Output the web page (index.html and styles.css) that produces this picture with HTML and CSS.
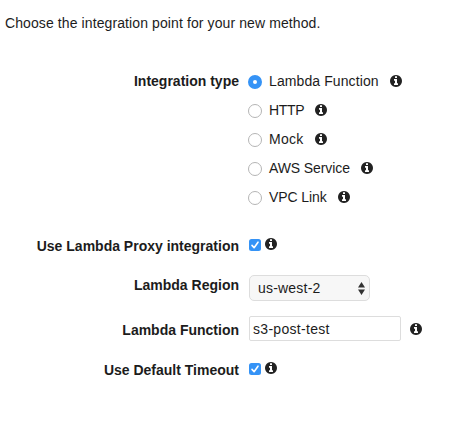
FILE: index.html
```html
<!DOCTYPE html>
<html lang="en">
<head>
<meta charset="utf-8">
<title>Method integration</title>
<link rel="stylesheet" href="styles.css">
</head>
<body>
<svg width="0" height="0" class="defs">
  <symbol id="info" viewBox="0 128 1536 1536"><path d="M1024 1376v-160q0-14-9-23t-23-9h-96v-512q0-14-9-23t-23-9h-320q-14 0-23 9t-9 23v160q0 14 9 23t23 9h96v320h-96q-14 0-23 9t-9 23v160q0 14 9 23t23 9h448q14 0 23-9t9-23zm-128-896v-160q0-14-9-23t-23-9h-192q-14 0-23 9t-9 23v160q0 14 9 23t23 9h192q14 0 23-9t9-23zm640 416q0 209-103 385.5t-279.5 279.5-385.5 103-385.5-103-279.5-279.5-103-385.5 103-385.5 279.5-279.5 385.5-103 385.5 103 279.5 279.5 103 385.5z"/></symbol>
  <symbol id="check" viewBox="0 0 12 12"><path d="M3 6.4 5.1 8.7 9 3.2" fill="none" stroke="#fff" stroke-width="1.6" stroke-linecap="round" stroke-linejoin="round"/></symbol>
</svg>
<p class="intro">Choose the integration point for your new method.</p>
<form class="form">
  <div class="row types">
    <span class="label">Integration type</span>
    <div class="options">
      <label class="option"><span class="radio on"></span><span class="text">Lambda Function</span><svg class="info"><use href="#info"/></svg></label>
      <label class="option"><span class="radio"></span><span class="text http">HTTP</span><svg class="info"><use href="#info"/></svg></label>
      <label class="option"><span class="radio"></span><span class="text mock">Mock</span><svg class="info"><use href="#info"/></svg></label>
      <label class="option"><span class="radio"></span><span class="text aws">AWS Service</span><svg class="info"><use href="#info"/></svg></label>
      <label class="option"><span class="radio"></span><span class="text vpc">VPC Link</span><svg class="info"><use href="#info"/></svg></label>
    </div>
  </div>
  <div class="row proxy">
    <span class="label">Use Lambda Proxy integration</span>
    <div class="control"><svg class="checkbox"><use href="#check"/></svg><svg class="info"><use href="#info"/></svg></div>
  </div>
  <div class="row region">
    <span class="label">Lambda Region</span>
    <div class="control"><div class="select"><span>us-west-2</span><svg class="arrows" viewBox="0 0 7 13"><path d="M0 5.4 3.5 0 7 5.4zM0 7.6h7L3.5 13z"/></svg></div></div>
  </div>
  <div class="row function">
    <span class="label">Lambda Function</span>
    <div class="control"><div class="input">s3-post-test</div><svg class="info"><use href="#info"/></svg></div>
  </div>
  <div class="row timeout">
    <span class="label">Use Default Timeout</span>
    <div class="control"><svg class="checkbox"><use href="#check"/></svg><svg class="info"><use href="#info"/></svg></div>
  </div>
</form>
</body>
</html>
```
FILE: styles.css
```css
* { box-sizing: border-box; }
body {
  margin: 0;
  background: #fff;
  color: #1c1c1c;
  font: 14px/20px "Liberation Sans", Arial, sans-serif;
  letter-spacing: 0.1px;
  white-space: nowrap;
}
.defs { display: block; }
.intro { margin: 0; padding: 13px 0 0 5px; }
.form { padding-top: 38px; }
.row {
  display: grid;
  grid-template-columns: 239px 1fr;
  column-gap: 10px;
}
.label { text-align: right; font-weight: bold; letter-spacing: 0; }
.options { display: flex; flex-direction: column; gap: 9px; margin-left: -1px; }
.option { display: flex; height: 20px; }
.text.http { letter-spacing: -0.35px; }
.text.mock { letter-spacing: 0.3px; }
.text.aws { letter-spacing: -0.1px; }
.text.vpc { letter-spacing: -0.1px; }
.radio {
  width: 14px;
  height: 14px;
  margin: 4px 7px 0 0;
  border: 1px solid #b5b5b5;
  border-radius: 50%;
  background: #fff;
}
.radio.on { border: 5px solid #3593f6; }
.info { flex: none; width: 12px; height: 12px; fill: #222; }
.option .info { margin: 4px 0 0 11px; }
.control { display: flex; }
.checkbox {
  width: 12px;
  height: 12px;
  margin: 1px 4px 0 0;
  border-radius: 2.5px;
  background: #3593f6;
}
.proxy { margin-top: 29px; height: 20px; }
.proxy .control, .timeout .control { padding-top: 2px; }
.region { margin-top: 19px; height: 26px; }
.select {
  display: flex;
  align-items: center;
  justify-content: space-between;
  width: 121px;
  height: 26px;
  padding: 0 4px 0 8px;
  border: 1px solid #ddd;
  border-radius: 5px;
  background: #f7f7f7;
  letter-spacing: 0.2px;
}
.arrows { width: 7px; height: 13px; fill: #333; }
.function { margin-top: 15px; height: 25px; }
.function .label { padding-top: 4px; }
.function .control { align-items: center; gap: 9px; }
.input {
  width: 152px;
  height: 25px;
  padding: 0 3px;
  border: 1px solid #ddd;
  border-radius: 2px;
  line-height: 24px;
  letter-spacing: 0.3px;
}
.timeout { margin-top: 19px; height: 20px; }
```
